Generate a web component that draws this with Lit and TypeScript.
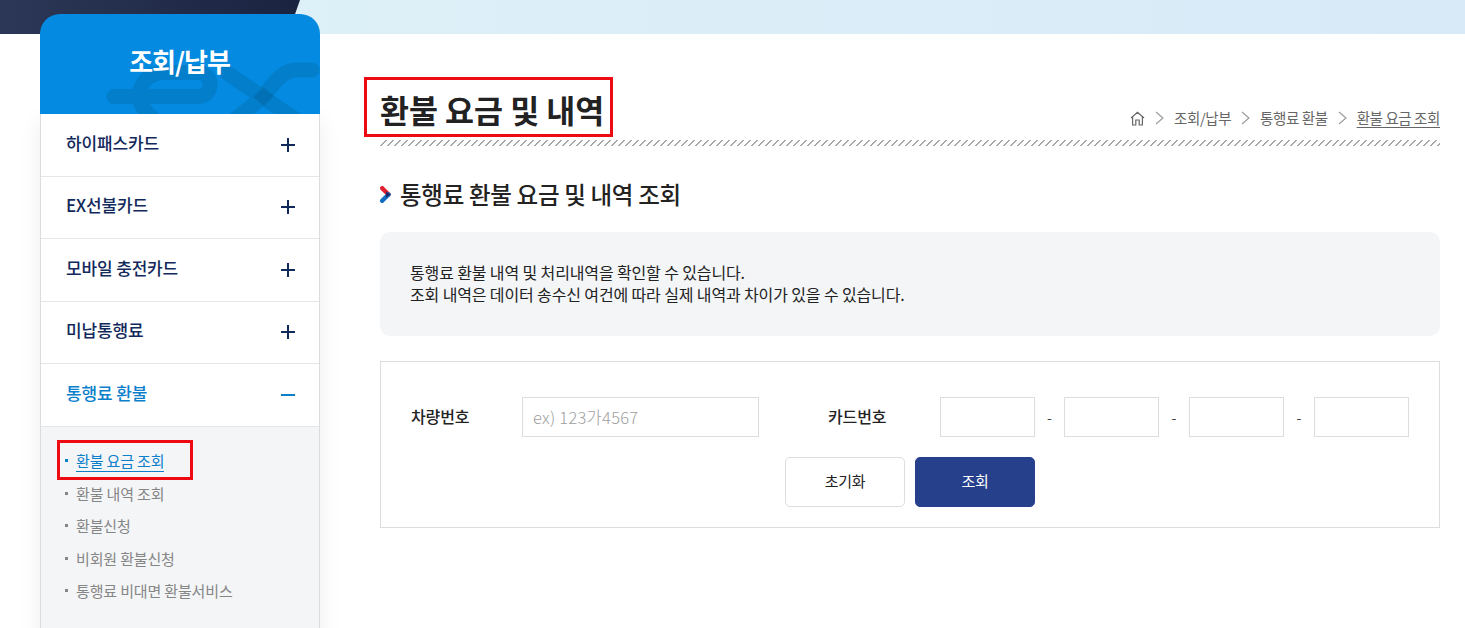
import { LitElement, html, css, svg } from 'lit';
import { customElement, property } from 'lit/decorators.js';

const MENU = ['하이패스카드', 'EX선불카드', '모바일 충전카드', '미납통행료'];
const SUB_MENU = ['환불 요금 조회', '환불 내역 조회', '환불신청', '비회원 환불신청', '통행료 비대면 환불서비스'];

@customElement('app-sidebar')
export class AppSidebar extends LitElement {
  @property({ type: String }) active: string = '환불 요금 조회';

  static styles = css`
    :host {
      display: block;
      flex: none;
      width: 280px;
      margin-top: -20px;
      position: relative;
      z-index: 1;
    }

    header {
      background-color: #048ae0;
      border-radius: 20px 20px 0 0;
      box-sizing: border-box;
      color: #fff;
      font-size: 26px;
      font-weight: 700;
      height: 100px;
      letter-spacing: -1px;
      line-height: 38px;
      overflow: hidden;
      padding: 28px 1px 0 0;
      position: relative;
      text-align: center;
    }

    header span {
      position: relative;
    }

    header svg {
      left: 0;
      position: absolute;
      top: 0;
    }

    nav {
      background-color: #fff;
      border: 1px solid #dcdcdc;
      border-top: 0;
      box-shadow: 0 6px 22px rgba(0, 0, 0, 0.07);
    }

    .item {
      align-items: center;
      border-bottom: 1px solid #e6e6e6;
      box-sizing: border-box;
      color: #12295b;
      display: flex;
      font-size: 17px;
      font-weight: 500;
      height: 62.5px;
      justify-content: space-between;
      letter-spacing: -0.15px;
      padding: 0 24px 5px 25px;
    }

    .item.open {
      color: #0c7fcb;
    }

    .item svg {
      margin-top: 5px;
    }

    ul {
      background-color: #f4f5f7;
      height: 202px;
      list-style: none;
      margin: 0;
      padding: 18px 0 0 24px;
    }

    li {
      align-items: center;
      color: #858585;
      display: flex;
      font-size: 15px;
      gap: 8px;
      height: 32.5px;
      letter-spacing: -0.15px;
    }

    li::before {
      background-color: #858585;
      content: '';
      height: 3px;
      width: 3px;
    }

    li.current {
      color: #0c7fcb;
      position: relative;
    }

    li.current::before {
      background-color: #0c7fcb;
    }

    li.current span {
      border-bottom: 1px solid #0c7fcb;
      line-height: 21px;
      margin-top: 1px;
    }

    .mark {
      border: 3px solid #ee0a12;
      box-sizing: border-box;
      height: 40px;
      left: -8px;
      position: absolute;
      top: -5px;
      width: 136px;
    }
  `;

  renderIcon(open: boolean) {
    return html`
      <svg width="14" height="14" viewBox="0 0 14 14" stroke=${open ? '#0c7fcb' : '#12295b'} stroke-width="2">
        <path d="M0 7H14"></path>
        ${open ? '' : svg`<path d="M7 0V14"></path>`}
      </svg>
    `;
  }

  render() {
    return html`
      <header>
        <svg width="280" height="100" viewBox="40 14 280 100" fill="none" stroke="#037ecb" stroke-width="15" stroke-linecap="round">
          <path d="M114 96.500H198C214 96.500 214 72.500 198 72.500H165C147 72.500 139.500 85 139.500 97C139.500 105 146 113 157 122"></path>
          <path d="M227 73L298 121"></path>
          <path d="M312 70H296C282 70 274 84 263 96C254 105 247 110 234 120"></path>
          <path d="M253 97L263 87L274 96L264 106Z" fill="#0270b5" stroke="none"></path>
        </svg>
        <span>조회/납부</span>
      </header>
      <nav>
        ${MENU.map(name => html`<div class="item">${name}${this.renderIcon(false)}</div>`)}
        <div class="item open">통행료 환불${this.renderIcon(true)}</div>
        <ul>
          ${SUB_MENU.map(name => html`
            <li class=${name === this.active ? 'current' : ''}>
              <span>${name}</span>
              ${name === this.active ? html`<i class="mark"></i>` : ''}
            </li>
          `)}
        </ul>
      </nav>
    `;
  }
}

@customElement('app-root')
export class AppRoot extends LitElement {
  static styles = css`
    :host {
      color: #222;
      display: block;
      font-family: 'Noto Sans CJK KR', 'Noto Sans', sans-serif;
      height: 628px;
      overflow: hidden;
    }

    .banner {
      background: linear-gradient(90deg, #def2f8, #d8eaf8);
      height: 34px;
      overflow: hidden;
      position: relative;
    }

    .banner::before {
      background: linear-gradient(90deg, #2c3757, #1a2340);
      clip-path: polygon(0 0, 300px 0, 288px 34px, 0 34px);
      content: '';
      height: 34px;
      left: 0;
      position: absolute;
      top: 0;
      width: 300px;
    }

    .page {
      display: flex;
      gap: 60px;
      padding: 0 25px 0 40px;
    }

    main {
      flex: 1;
      min-width: 0;
      padding-top: 43px;
    }

    .title-row {
      align-items: flex-end;
      background: repeating-linear-gradient(135deg, transparent 0 3.95px, #a8a8a8 3.95px 4.95px) bottom / 100% 6px no-repeat;
      box-sizing: border-box;
      display: flex;
      height: 69px;
      justify-content: space-between;
      padding-bottom: 7px;
    }

    h1 {
      font-size: 31.5px;
      font-weight: 700;
      line-height: 44px;
      margin: 0 0 8px;
      position: relative;
    }

    h1 i {
      border: 3px solid #ee0a12;
      box-sizing: border-box;
      height: 60px;
      left: -16px;
      position: absolute;
      top: -10px;
      width: 249px;
    }

    .crumbs {
      align-items: center;
      color: #666;
      display: flex;
      font-size: 14.5px;
      gap: 10px;
      letter-spacing: -0.4px;
      line-height: 20px;
      padding-bottom: 11px;
    }

    .crumbs u {
      text-underline-offset: 3px;
    }

    h2 {
      align-items: center;
      display: flex;
      font-size: 23.5px;
      font-weight: 500;
      gap: 9px;
      letter-spacing: -0.3px;
      line-height: 32px;
      margin: 32px 0 22px;
    }

    .info {
      background-color: #f3f5f7;
      border-radius: 10px;
      box-sizing: border-box;
      font-size: 16px;
      height: 104px;
      letter-spacing: -0.13px;
      line-height: 22px;
      padding: 29px 30px;
    }

    form {
      border: 1px solid #ddd;
      box-sizing: border-box;
      height: 167px;
      margin-top: 25px;
      padding: 35px 30px 0;
    }

    .fields {
      align-items: center;
      display: flex;
    }

    label {
      font-size: 16px;
      font-weight: 500;
      letter-spacing: -0.1px;
      padding-bottom: 2px;
    }

    .car-label {
      width: 111px;
    }

    .card-label {
      margin-left: 69px;
      width: 112px;
    }

    input {
      border: 1px solid #ddd;
      box-sizing: border-box;
      font: inherit;
      font-size: 16.5px;
      font-weight: 300;
      height: 40px;
      letter-spacing: 0.27px;
      margin: 0;
      padding: 0 10px;
      width: 95px;
    }

    input::placeholder {
      color: #a0a0a0;
      opacity: 1;
    }

    .car-input {
      width: 237px;
    }

    .dash {
      color: #444;
      font-size: 14px;
      text-align: center;
      width: 29px;
    }

    .dash ~ .dash {
      width: 30px;
    }

    .actions {
      display: flex;
      gap: 10px;
      justify-content: center;
      margin-top: 20px;
    }

    button {
      background-color: #fff;
      border: 1px solid #ddd;
      border-radius: 5px;
      color: #222;
      font: inherit;
      font-size: 15px;
      height: 50px;
      letter-spacing: -0.3px;
      padding: 0 0 3px;
      width: 120px;
    }

    button.primary {
      background-color: #27408b;
      border-color: #27408b;
      color: #fff;
    }
  `;

  renderChevron() {
    return html`
      <svg width="11" height="17" viewBox="0 0 11 17" fill="none" stroke-width="4.4" stroke-linecap="round">
        <path d="M2.200 2.200L8.500 8.500" stroke="#e3202f"></path>
        <path d="M8.500 8.500L2.200 14.800" stroke="#0f6cc0"></path>
        <path d="M6.800 6.800L9.200 8.500L6.800 10.200Z" fill="#1c2a6b" stroke="#1c2a6b" stroke-width="1.500" stroke-linecap="butt"></path>
      </svg>
    `;
  }

  renderHome() {
    return html`
      <svg width="15" height="15" viewBox="0 0 15 15" fill="none" stroke="#666" stroke-width="1.2">
        <path d="M1 7L7.500 1.200L14 7M2.600 6V14H5.800V9H9.200V14H12.400V6"></path>
      </svg>
    `;
  }

  renderArrow() {
    return html`
      <svg width="9" height="14" viewBox="0 0 9 14" fill="none" stroke="#999" stroke-width="1.1">
        <path d="M1 1L8 7L1 13"></path>
      </svg>
    `;
  }

  render() {
    return html`
      <div class="banner"></div>
      <div class="page">
        <app-sidebar></app-sidebar>
        <main>
          <div class="title-row">
            <h1>환불 요금 및 내역<i></i></h1>
            <div class="crumbs">
              ${this.renderHome()} ${this.renderArrow()}
              <span>조회/납부</span> ${this.renderArrow()}
              <span>통행료 환불</span> ${this.renderArrow()}
              <u>환불 요금 조회</u>
            </div>
          </div>
          <h2>${this.renderChevron()}통행료 환불 요금 및 내역 조회</h2>
          <div class="info">
            통행료 환불 내역 및 처리내역을 확인할 수 있습니다.<br />
            조회 내역은 데이터 송수신 여건에 따라 실제 내역과 차이가 있을 수 있습니다.
          </div>
          <form>
            <div class="fields">
              <label class="car-label">차량번호</label>
              <input class="car-input" placeholder="ex) 123가4567" />
              <label class="card-label">카드번호</label>
              <input /><span class="dash">-</span>
              <input /><span class="dash">-</span>
              <input /><span class="dash">-</span>
              <input />
            </div>
            <div class="actions">
              <button type="button">초기화</button>
              <button type="button" class="primary">조회</button>
            </div>
          </form>
        </main>
      </div>
    `;
  }
}
